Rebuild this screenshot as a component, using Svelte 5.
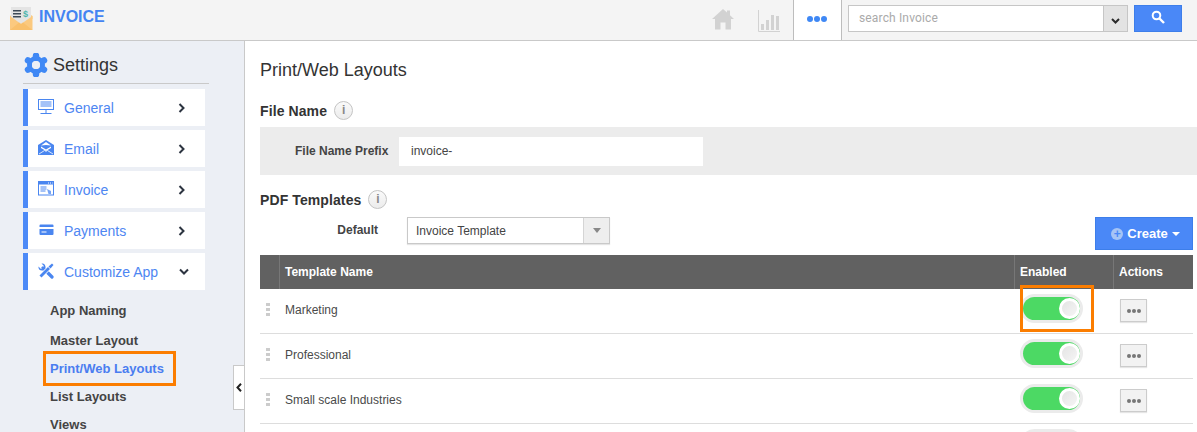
<script>
  const nav = [
    { label: 'General', icon: 'monitor' },
    { label: 'Email', icon: 'mail' },
    { label: 'Invoice', icon: 'window' },
    { label: 'Payments', icon: 'card' },
    { label: 'Customize App', icon: 'tools', open: true }
  ];
  const sub = [
    { label: 'App Naming', h: 30 },
    { label: 'Master Layout', h: 30 },
    { label: 'Print/Web Layouts', h: 27, active: true },
    { label: 'List Layouts', h: 28 },
    { label: 'Views', h: 28 }
  ];
  const rows = ['Marketing', 'Professional', 'Small scale Industries', ''];
</script>

<div class="page">
  <header class="top">
    <div class="brand">
      <svg width="25" height="24" viewBox="0 0 25 24">
        <rect x="2" y="0" width="20" height="17" fill="#e4e4e4"/>
        <rect x="4" y="3" width="8" height="1.500" fill="#3d4a57"/>
        <rect x="4" y="6" width="8" height="1.500" fill="#3d4a57"/>
        <rect x="4" y="9" width="8" height="1.500" fill="#3d4a57"/>
        <text x="14" y="10" font-size="9" fill="#4db6ac" font-family="Liberation Sans">$</text>
        <path d="M1 9 L12 17 L23.500 9 V23 H1Z" fill="#fbc97f"/>
        <path d="M1 9 L2 8.300 V12 L1 12Z M23.500 9 L22 8 V12 H23.500Z" fill="#fbc97f"/>
        <path d="M1 23 L10 15.500 L12 17 L14 15.500 L23.500 23Z" fill="#f9c06c"/>
      </svg>
      <span>INVOICE</span>
    </div>
    <div class="tools">
      <svg class="home" width="22" height="21" viewBox="0 0 22 21"><path d="M11 0 L15 3.500 V1.500 H18 V6.200 L22 10 H19 V20.500 H13.500 V13.500 H8.500 V20.500 H3 V10 H0Z" fill="#d2d2d2"/></svg>
      <svg class="chart" width="22" height="22" viewBox="0 0 22 22"><path d="M.5 0V21.500H22" fill="none" stroke="#d2d2d2"/><rect x="3" y="14" width="3" height="6" fill="#d2d2d2"/><rect x="8" y="10" width="3" height="10" fill="#d2d2d2"/><rect x="13" y="5" width="3" height="15" fill="#d2d2d2"/><rect x="18" y="6" width="3" height="14" fill="#d2d2d2"/></svg>
      <div class="more"><i></i><i></i><i></i></div>
      <div class="search">
        <div class="sinput">search Invoice</div>
        <div class="scaret"><svg width="9" height="6" viewBox="0 0 9 6"><path d="M1 1 L4.500 4.500 L8 1" fill="none" stroke="#2b2b2b" stroke-width="2"/></svg></div>
      </div>
      <button class="sbtn" aria-label="Search"><svg width="14" height="14" viewBox="0 0 14 14"><circle cx="5.500" cy="5.500" r="3.800" fill="none" stroke="#fff" stroke-width="2"/><path d="M8.500 8.500 L13 13" stroke="#fff" stroke-width="2.400"/></svg></button>
    </div>
  </header>

  <div class="body">
    <aside class="side">
      <div class="settings">
        <svg width="24" height="24" viewBox="0 0 24 24">
          <circle cx="12" cy="12" r="6.500" fill="none" stroke="#3f88f5" stroke-width="5"/>
          <g stroke="#3f88f5" stroke-width="6.500" stroke-linecap="round">
            <path d="M12 3.200V2.800M12 20.800V21.200M4.400 7.600 4 7.400M19.600 16.400 20 16.600M19.600 7.600 20 7.400M4.400 16.400 4 16.600"/>
          </g>
          <circle cx="12" cy="12" r="4" fill="#eceff5"/>
        </svg>
        <span>Settings</span>
      </div>
      <nav class="nav">
        {#each nav as n}
          <div class="item">
            <span class="ic">
              {#if n.icon === 'monitor'}
                <svg width="16" height="15" viewBox="0 0 16 15"><rect x=".5" y=".5" width="15" height="10" fill="none" stroke="#4a86f0"/><path d="M2.500 3h11M2.500 5h11M2.500 7h11M8 11v3M2.500 14.500h11" stroke="#4a86f0" fill="none"/></svg>
              {:else if n.icon === 'mail'}
                <svg width="16" height="15" viewBox="0 0 16 15"><path d="M8 0 16 5V15H0V5Z" fill="#4a86f0"/><path d="M8 2 13 5.500 8 5 3 5.500Z" fill="#fff"/><path d="M3 6.500 8 9.500 13 6.500V8L8 11 3 8Z" fill="#fff"/><path d="M1 14 6.500 10.500 8 11.300 9.500 10.500 15 14" fill="none" stroke="#fff" stroke-width=".8"/></svg>
              {:else if n.icon === 'window'}
                <svg width="16" height="15" viewBox="0 0 16 15"><rect x=".5" y=".5" width="15" height="13.500" fill="#fff" stroke="#4a86f0"/><rect x="1" y="1" width="14" height="2.500" fill="#4a86f0"/><path d="M10 2h1M12 2h1M14 2h.6" stroke="#fff"/><path d="M2.500 6h6M2.500 8h6M2.500 10h5" stroke="#4a86f0"/><path d="M9 8l4 2v3h-2.500z" fill="#4a86f0" opacity=".75"/></svg>
              {:else if n.icon === 'card'}
                <svg width="16" height="15" viewBox="0 0 16 15"><path fill-rule="evenodd" d="M3 2.500h11.500a1 1 0 0 1 1 1v8.500a1 1 0 0 1-1 1H2.500a1 1 0 0 1-1-1V3.500a1 1 0 0 1 1-1zM1.500 5v2h14V5zM3.500 9.500v1h5v-1z" fill="#4a86f0"/></svg>
              {:else}
                <svg width="16" height="16" viewBox="0 0 16 16">
                  <path d="M5 5 14 14" stroke="#4a86f0" stroke-width="3.200" stroke-linecap="round"/>
                  <path d="M.5 3.500 3 6l2.500-.5.500-2.500L3.500.5C6 0 8 2 7.500 5L5 7.500C2 8 0 6 .5 3.500Z" fill="#4a86f0"/>
                  <path d="M2.500 13.500 11 5" stroke="#fff" stroke-width="4.400"/>
                  <path d="M2.500 13.500 11 5" stroke="#4a86f0" stroke-width="2.800"/>
                  <path d="M10.500 3.500 14 .5 15.500 2 12.500 5.500Z" fill="#4a86f0"/>
                </svg>
              {/if}
            </span>
            <span class="lbl">{n.label}</span>
            <svg class:down={n.open} class="chev" width="8" height="10" viewBox="0 0 8 10"><path d="M1.500 1 5.500 5 1.500 9" fill="none" stroke="#2c3440" stroke-width="2"/></svg>
          </div>
        {/each}
      </nav>
      <ul class="sub">
        {#each sub as s}
          <li class:active={s.active} style="height:{s.h}px">{s.label}</li>
        {/each}
      </ul>
      <div class="collapse"><svg width="6" height="9" viewBox="0 0 6 9"><path d="M5 .8 1.500 4.500 5 8.200" fill="none" stroke="#222" stroke-width="2"/></svg></div>
    </aside>

    <main class="main">
      <h1>Print/Web Layouts</h1>
      <div class="sect first"><span>File Name</span><em class="info">i</em></div>
      <div class="panel">
        <label for="prefix">File Name Prefix</label>
        <div id="prefix" class="field">invoice-</div>
      </div>
      <div class="sect second"><span>PDF Templates</span><em class="info">i</em></div>
      <div class="deflt">
        <span class="dl">Default</span>
        <div class="select"><span>Invoice Template</span><b><i></i></b></div>
        <button class="create"><span class="plus">+</span>Create<i class="caret"></i></button>
      </div>
      <div class="table">
        <div class="thead">
          <div class="c0"></div>
          <div class="c1">Template Name</div>
          <div class="c2">Enabled</div>
          <div class="c3">Actions</div>
        </div>
        {#each rows as r, i}
          <div class="row">
            <div class="c0 drag">{#if r}<i></i><i></i><i></i>{/if}</div>
            <div class="c1">{r}</div>
            <div class="c2"><span class="toggle"><span class="knob"></span></span>{#if i === 0}<span class="mark"></span>{/if}</div>
            <div class="c3">{#if r}<button class="dots" aria-label="Actions"><i></i><i></i><i></i></button>{/if}</div>
          </div>
        {/each}
      </div>
    </main>
  </div>
</div>

<style>
  :global(body) { margin: 0; overflow: hidden; background: #fff; }
  .page { width: 1197px; height: 432px; overflow: hidden; font-family: "Liberation Sans", Arial, sans-serif; color: #333; }
  .top { height: 41px; box-sizing: border-box; background: #f4f4f4; border-bottom: 1px solid #c9c9c9; display: flex; justify-content: space-between; }
  .brand { display: flex; align-items: flex-start; padding: 7px 0 0 9px; gap: 5px; color: #4484f2; font-weight: 700; font-size: 16px; line-height: 20px; }
  .brand svg { display: block; }
  .tools { display: flex; align-items: flex-start; padding-right: 15px; }
  .home { margin: 9px 0 0 0; }
  .chart { margin: 10px 13px 0 24px; }
  .more { width: 47px; height: 38px; background: #fff; border-left: 1px solid #bdbdbd; border-right: 1px solid #bdbdbd; display: flex; align-items: center; justify-content: center; gap: 1px; padding-bottom: 2px; box-sizing: content-box; }
  .more i { width: 6px; height: 6px; border-radius: 50%; background: #3f88f5; }
  .more i:last-child { margin-right: 1px; }
  .search { display: flex; width: 280px; height: 27px; margin: 5px 0 0 6px; border: 1px solid #c6c6c6; background: #fff; box-sizing: border-box; }
  .sinput { flex: 1; padding-left: 10px; font-size: 12px; letter-spacing: .15px; line-height: 25px; color: #aaa; font-family: Roboto, "Liberation Sans", sans-serif; }
  .scaret { width: 24px; background: #e3e3e3; border-left: 1px solid #c6c6c6; display: flex; align-items: center; justify-content: center; padding-top: 4px; box-sizing: border-box; }
  .sbtn { width: 48px; height: 27px; margin: 5px 0 0 6px; background: #4a88f7; border: 1px solid #3d7eea; display: flex; align-items: center; justify-content: center; padding: 0 0 3px; }

  .body { display: flex; height: 391px; }
  .side { position: relative; flex: none; background: #eceff5; border-right: 1px solid #c9c9c9; padding-left: 23px; box-sizing: border-box; width: 245px; }
  .settings { width: 186px; height: 43px; border-bottom: 1px solid #c9c9c9; display: flex; align-items: center; gap: 5px; font-size: 18px; color: #333; box-sizing: border-box; padding: 6px 0 0 1px; }
  .nav { display: flex; flex-direction: column; gap: 4px; margin-top: 5px; }
  .item { width: 182px; height: 37px; background: #fff; border-left: 5px solid #4d8af7; box-sizing: border-box; display: flex; align-items: center; color: #4e86f2; font-size: 14px; }
  .ic { width: 36px; padding-left: 10px; box-sizing: border-box; display: flex; align-items: center; height: 100%; padding-bottom: 2px; }
  .ic svg { display: block; }
  .lbl { flex: 1; padding-top: 1px; }
  .chev { margin-right: 19px; }
  .chev.down { transform: rotate(90deg); margin-right: 17px; }
  .sub { list-style: none; margin: 5px 0 0; padding: 0 0 0 27px; }
  .sub li { position: relative; display: flex; align-items: center; font-size: 13px; font-weight: 700; color: #444; }
  .sub li.active { color: #4a7df0; }
  .sub li.active::before { content: ""; position: absolute; left: -7px; top: -4px; width: 133px; height: 35px; border: 3px solid #fb7d00; box-sizing: border-box; }
  .collapse { position: absolute; right: 0; top: 324px; width: 11px; height: 45px; background: #fff; border: 1px solid #c9c9c9; border-right: 0; box-sizing: border-box; display: flex; align-items: center; justify-content: center; }

  .main { flex: 1; min-width: 0; padding: 0 4px 0 15px; }
  h1 { margin: 0; padding-top: 19px; font-size: 18px; font-weight: 400; line-height: 20px; color: #333; }
  .sect { display: flex; align-items: center; font-size: 14px; font-weight: 700; color: #333; gap: 7px; height: 20px; letter-spacing: .1px; }
  .sect.first { margin-top: 21px; }
  .sect.second { margin-top: 15px; }
  .info { width: 19px; height: 19px; margin-top: -1px; box-sizing: border-box; border: 1px solid #c4c4c4; border-radius: 50%; background: linear-gradient(#fafafa, #ececec); font-style: normal; font-size: 12px; font-weight: 700; color: #888; text-align: center; line-height: 17px; letter-spacing: 0; }
  .panel { display: flex; align-items: center; height: 48px; background: #ececec; margin: 6px -4px 0 0; padding-left: 35px; }
  .panel label { font-size: 12px; font-weight: 700; color: #444; width: 104px; padding-bottom: 1px; }
  .field { width: 304px; height: 29px; background: #fff; padding-left: 12px; box-sizing: border-box; font-size: 12px; line-height: 29px; color: #444; }
  .deflt { display: flex; align-items: flex-start; height: 38px; margin-top: 7px; }
  .dl { width: 118px; text-align: right; font-size: 12px; font-weight: 700; color: #444; line-height: 27px; }
  .select { margin-left: 29px; width: 203px; height: 27px; box-sizing: border-box; border: 1px solid #c9c9c9; display: flex; align-items: center; font-size: 12px; color: #444; padding-left: 8px; background: #fff; box-shadow: 0 1px 1px #e5e5e5; }
  .select span { flex: 1; }
  .select b { width: 25px; height: 100%; background: #eee; border-left: 1px solid #d5d5d5; display: flex; align-items: center; justify-content: center; }
  .select b i { border-left: 4px solid transparent; border-right: 4px solid transparent; border-top: 5px solid #888; }
  .create { margin-left: auto; width: 98px; height: 33px; background: #4a88f7; border: 1px solid #3d7eea; color: #fff; font: 700 13px "Liberation Sans", sans-serif; display: flex; align-items: center; justify-content: center; gap: 4px; padding: 0 0 0 3px; }
  .plus { width: 12px; height: 12px; border-radius: 50%; background: #a5c4f5; color: #4a88f7; font-size: 12px; line-height: 12px; text-align: center; }
  .caret { border-left: 4px solid transparent; border-right: 4px solid transparent; border-top: 4px solid #fff; }
  .table { font-size: 12px; width: 933px; }
  .thead, .row { display: grid; grid-template-columns: 20px 735px 99px 79px; }
  .thead { height: 34px; background: #616161; color: #fff; font-weight: 700; }
  .thead > div { display: flex; align-items: center; border-right: 1px solid #777; box-sizing: border-box; padding-left: 5px; }
  .thead > div:last-child { border-right: 0; }
  .row { height: 45px; border-bottom: 1px solid #ddd; box-sizing: border-box; color: #4a4a4a; }
  .row > div { display: flex; align-items: center; }
  .row .c1 { padding-left: 5px; padding-bottom: 3px; }
  .row .drag { flex-direction: column; align-items: flex-start; justify-content: center; gap: 2px; padding: 0 0 3px 6px; box-sizing: border-box; }
  .drag i { width: 4px; height: 3px; background: #ccc; }
  .row .c2 { position: relative; padding-left: 8px; align-items: flex-start; padding-top: 8px; box-sizing: border-box; }
  .toggle { display: block; width: 57px; height: 23px; border-radius: 12px; background: #4cd964; box-shadow: 0 0 0 3px #ebebeb; position: relative; }
  .knob { position: absolute; right: 0; top: 1px; width: 15px; height: 15px; border: 3px solid #fff; border-radius: 50%; background: linear-gradient(135deg, #e4e4e4, #f5f5f5); }
  .mark { position: absolute; left: 5px; top: -4px; width: 74px; height: 47px; border: 3px solid #fb7d00; box-sizing: border-box; }
  .row .c3 { padding-left: 6px; align-items: flex-start; padding-top: 10px; box-sizing: border-box; }
  .dots { width: 27px; height: 23px; background: #f2f2f2; border: 1px solid #ccc; display: flex; align-items: center; justify-content: center; gap: 1px; padding: 0; box-shadow: 0 1px 1px #e5e5e5; }
  .dots i { width: 4px; height: 4px; border-radius: 50%; background: #777; }
</style>
